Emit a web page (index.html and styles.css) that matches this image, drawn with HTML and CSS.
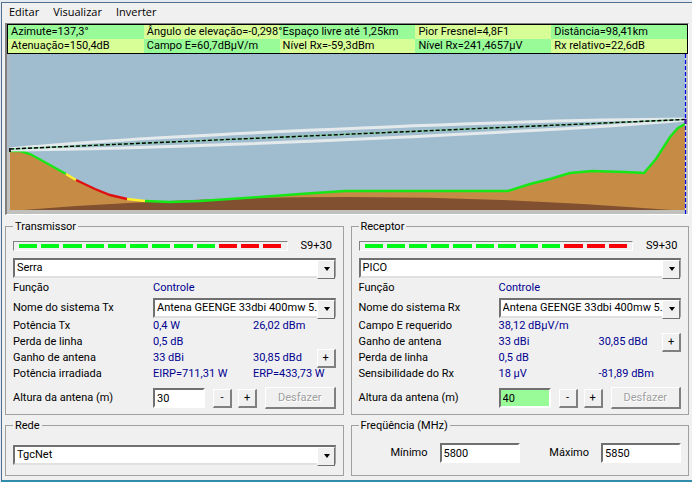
FILE: index.html
```html
<!DOCTYPE html>
<html lang="pt-BR">
<head>
    <meta charset="UTF-8">
    <meta name="viewport" content="width=device-width, initial-scale=1.0">
    <title>Enlace de rádio</title>
    <link rel="stylesheet" href="styles.css">
</head>

<body>
    <div class="window">
        <!-- Menu bar -->
        <nav class="menu">
            <a href="#">Editar</a>
            <a href="#">Visualizar</a>
            <a href="#">Inverter</a>
        </nav>

        <!-- Link summary and terrain profile -->
        <div class="profile">
            <table class="summary">
                <tr>
                    <td>Azimute=137,3°</td>
                    <td>Ângulo de elevação=-0,298°</td>
                    <td>Espaço livre até 1,25km</td>
                    <td>Pior Fresnel=4,8F1</td>
                    <td>Distância=98,41km</td>
                </tr>
                <tr>
                    <td>Atenuação=150,4dB</td>
                    <td>Campo E=60,7dBµV/m</td>
                    <td>Nível Rx=-59,3dBm</td>
                    <td>Nível Rx=241,4657µV</td>
                    <td>Rx relativo=22,6dB</td>
                </tr>
            </table>
            <svg class="terrain" viewBox="7 54 681 160" preserveAspectRatio="none">
                <rect x="7" y="54" width="681" height="160" fill="#c0c0bc"/>
                <rect x="10" y="54" width="676" height="156" fill="#a0bccf"/>
                <rect x="7" y="54" width="3" height="97" fill="#adbcc6"/>
                <path d="M10 151 L20 151 L30 154 L50 165 L66 174 L76 180 L95 189 L110 195 L127 199 L145 201 L170 202 L200 201 L260 197 L300 194 L345 191 L508 191 L530 184 L550 179 L570 173 L592 171 L625 172 L644 173 L656 159 L670 137 L678 128 L685 124 V210 H10 Z" fill="#c68c45"/>
                <path d="M23 210 Q348 184 672 210 Z" fill="#805030"/>
                <g fill="none" stroke-width="2.4">
                    <path d="M10 151 L20 151 L30 154 L50 165 L66 174" stroke="#17e617"/>
                    <path d="M66 174 L76 180" stroke="#fff02c"/>
                    <path d="M76 180 L95 189 L110 195 L127 199" stroke="#e01010"/>
                    <path d="M127 199 L145 201" stroke="#fff02c"/>
                    <path d="M145 201 L170 202 L200 201 L260 197 L300 194 L345 191 L508 191 L530 184 L550 179 L570 173 L592 171 L625 172 L644 173 L656 159 L670 137 L678 128 L685 124" stroke="#17e617"/>
                </g>
                <g fill="none">
                    <path d="M10 149 C110 138 480 120 685 119" stroke="#e4eaec" stroke-width="3"/>
                    <path d="M10 150 C210 148 580 130 685 120" stroke="#e4eaec" stroke-width="3"/>
                    <path d="M10 149 L685 119.5" stroke="#7fd69a" stroke-width="1.6"/>
                    <path d="M10 149 L685 119.5" stroke="#000" stroke-width="1.4" stroke-dasharray="4 2"/>
                    <path d="M10 148 V152" stroke="#222" stroke-width="2"/>
                    <path d="M685.5 54 V214" stroke="#d0d8f0" stroke-width="1.2"/>
                    <path d="M685.5 54 V214" stroke="#0000e8" stroke-width="1.2" stroke-dasharray="4 2"/>
                    <path d="M685.5 119 V124" stroke="#4000b0" stroke-width="2"/>
                </g>
            </svg>
        </div>

        <div class="panels">
            <!-- Transmitter -->
            <fieldset>
                <legend>Transmissor</legend>
                <div class="signal">
                    <div class="meter">
                        <i></i><i></i><i></i><i></i><i></i><i></i><i></i><i></i><i></i><i class="over"></i><i class="over"></i><i class="over"></i>
                    </div>
                    <span>S9+30</span>
                </div>
                <div class="combo">
                    <select aria-label="Transmissor"><option>Serra</option></select>
                </div>
                <div class="fields">
                    <span>Função</span>
                    <span class="value wide">Controle</span>
                    <label for="txSystem">Nome do sistema Tx</label>
                    <div class="combo wide">
                        <select id="txSystem"><option>Antena GEENGE 33dbi 400mw 5.</option></select>
                    </div>
                    <span>Potência Tx</span>
                    <span class="value">0,4 W</span>
                    <span class="value">26,02 dBm</span>
                    <span>Perda de linha</span>
                    <span class="value wide">0,5 dB</span>
                    <span>Ganho de antena</span>
                    <span class="value">33 dBi</span>
                    <span class="value gain">30,85 dBd <button class="step">+</button></span>
                    <span>Potência irradiada</span>
                    <span class="value">EIRP=711,31 W</span>
                    <span class="value">ERP=433,73 W</span>
                    <label for="txHeight">Altura da antena (m)</label>
                    <div class="height wide">
                        <input id="txHeight" type="text" value="30">
                        <button class="step">-</button>
                        <button class="step">+</button>
                        <button class="undo" disabled>Desfazer</button>
                    </div>
                </div>
            </fieldset>

            <!-- Receiver -->
            <fieldset>
                <legend>Receptor</legend>
                <div class="signal">
                    <div class="meter">
                        <i></i><i></i><i></i><i></i><i></i><i></i><i></i><i></i><i></i><i class="over"></i><i class="over"></i><i class="over"></i>
                    </div>
                    <span>S9+30</span>
                </div>
                <div class="combo">
                    <select aria-label="Receptor"><option>PICO</option></select>
                </div>
                <div class="fields">
                    <span>Função</span>
                    <span class="value wide">Controle</span>
                    <label for="rxSystem">Nome do sistema Rx</label>
                    <div class="combo wide">
                        <select id="rxSystem"><option>Antena GEENGE 33dbi 400mw 5.</option></select>
                    </div>
                    <span>Campo E requerido</span>
                    <span class="value wide">38,12 dBµV/m</span>
                    <span>Ganho de antena</span>
                    <span class="value">33 dBi</span>
                    <span class="value gain">30,85 dBd <button class="step">+</button></span>
                    <span>Perda de linha</span>
                    <span class="value wide">0,5 dB</span>
                    <span>Sensibilidade do Rx</span>
                    <span class="value">18 µV</span>
                    <span class="value">-81,89 dBm</span>
                    <label for="rxHeight">Altura da antena (m)</label>
                    <div class="height wide">
                        <input id="rxHeight" class="changed" type="text" value="40">
                        <button class="step">-</button>
                        <button class="step">+</button>
                        <button class="undo" disabled>Desfazer</button>
                    </div>
                </div>
            </fieldset>

            <!-- Network -->
            <fieldset>
                <legend>Rede</legend>
                <div class="combo network">
                    <select aria-label="Rede"><option>TgcNet</option></select>
                </div>
            </fieldset>

            <!-- Frequency range -->
            <fieldset>
                <legend>Freqüência (MHz)</legend>
                <div class="frequency">
                    <label for="minFreq">Mínimo</label>
                    <input id="minFreq" type="text" value="5800">
                    <label for="maxFreq">Máximo</label>
                    <input id="maxFreq" type="text" value="5850">
                </div>
            </fieldset>
        </div>
    </div>
</body>
</html>
```
FILE: styles.css
```css
* {
    box-sizing: border-box;
}
body {
    margin: 0;
    padding-left: 1px;
    background-color: #e4eaf0;
    font-family: Roboto, "Liberation Sans", Arial, sans-serif;
    font-size: 11px;
    line-height: 16px;
    color: #000;
}
.window {
    margin-top: 2px;
    padding: 0 3px 4px 3px;
    background-color: #f0f0f0;
    border-top: 1px solid #4f6f90;
    border-left: 1px solid #4f6f90;
    border-bottom: 2px solid #2f8fab;
}

/* Menu bar */
.menu {
    display: flex;
    gap: 14px;
    height: 20px;
    padding: 1px 4px;
    font-family: "Open Sans", "Noto Sans", sans-serif;
}
.menu a {
    color: #000;
    text-decoration: none;
}

/* Profile chart */
.profile {
    border-top: 1px solid #808080;
    border-left: 2px solid #808080;
    border-right: 1px solid #fff;
    border-bottom: 1px solid #fff;
}
.summary {
    width: 100%;
    table-layout: fixed;
    border-collapse: separate;
    border-spacing: 0;
    border: 1px solid #000;
}
.summary td {
    height: 14px;
    padding: 0 0 0 3px;
    line-height: 14px;
    white-space: nowrap;
    background-color: #98fb98;
}
.summary tr:first-child td:nth-child(even),
.summary tr:last-child td:nth-child(odd) {
    background-color: #d8fe98;
}
.terrain {
    display: block;
    width: 100%;
    height: 160px;
}

/* Group boxes */
.panels {
    display: grid;
    grid-template-columns: 1fr 1fr;
    gap: 3px 7px;
    padding-top: 4px;
}
fieldset {
    min-width: 0;
    margin: 0;
    padding: 0 7px;
    border: 1px solid #a0a0a0;
}
legend {
    padding: 0 2px;
    line-height: 15px;
}

/* Signal meter */
.signal {
    display: flex;
    align-items: center;
    gap: 13px;
    height: 24px;
}
.signal span {
    width: 35px;
}
.meter {
    flex: 1;
    display: flex;
    gap: 4px;
    padding: 2px 5px;
    border: 1px solid #fff;
    border-top-color: #808080;
    border-left-color: #808080;
}
.meter i {
    flex: 1;
    height: 4px;
    background-color: #00f818;
}
.meter .over {
    background-color: #f80008;
}

/* Drop-downs and text boxes */
select,
input {
    height: 20px;
    padding: 0 2px;
    font: inherit;
    color: #000;
    background-color: #fff;
    border: 2px solid #fff;
    border-top-color: #707070;
    border-left-color: #707070;
    border-radius: 0;
}
.combo {
    position: relative;
}
.combo select {
    display: block;
    width: 100%;
    padding: 0 16px 0 2px;
    border-right: 1px solid #a0a0a0;
    border-bottom-color: #e0e0e0;
    appearance: none;
}
.combo::before {
    content: "";
    position: absolute;
    top: 2px;
    right: 1px;
    width: 16px;
    height: 17px;
    background-color: #f0f0f0;
    border: 1px solid #fff;
    border-right-color: #707070;
    border-bottom-color: #707070;
    pointer-events: none;
}
.combo::after {
    content: "";
    position: absolute;
    top: 9px;
    right: 6px;
    border: 3px solid transparent;
    border-top: 4px solid #000;
    border-bottom: 0;
    pointer-events: none;
}

/* Equipment data */
.fields {
    display: grid;
    grid-template-columns: 140px 100px 1fr;
    grid-template-rows: 20px 20px repeat(4, 16px) 32px;
    align-items: center;
    white-space: nowrap;
}
.wide {
    grid-column: 2 / 4;
}
.value {
    color: #000090;
}
.gain {
    display: flex;
    align-items: center;
    justify-content: space-between;
    height: 16px;
}
button {
    padding: 0;
    font: inherit;
    color: #000;
    background-color: #f0f0f0;
    border: 1px solid #fff;
    border-right: 2px solid #808080;
    border-bottom: 2px solid #808080;
}
.step {
    flex: none;
    width: 19px;
    height: 19px;
    line-height: 14px;
}
.height {
    display: flex;
    align-items: center;
    gap: 6px;
}
.height input {
    width: 52px;
    margin-right: 2px;
}
.height .changed {
    background-color: #98fb98;
}
.undo {
    flex: 1;
    height: 22px;
    margin-left: 2px;
}
.undo:disabled {
    color: #a0a0a0;
    text-shadow: 1px 1px #fff;
}

/* Network and frequency */
.network {
    margin: 12px 0 10px;
}
.frequency {
    display: flex;
    align-items: center;
    gap: 12px;
    padding-top: 10px;
    padding-left: 32px;
}
.frequency label:nth-of-type(2) {
    margin-left: auto;
}
.frequency input {
    width: 80px;
}
```
